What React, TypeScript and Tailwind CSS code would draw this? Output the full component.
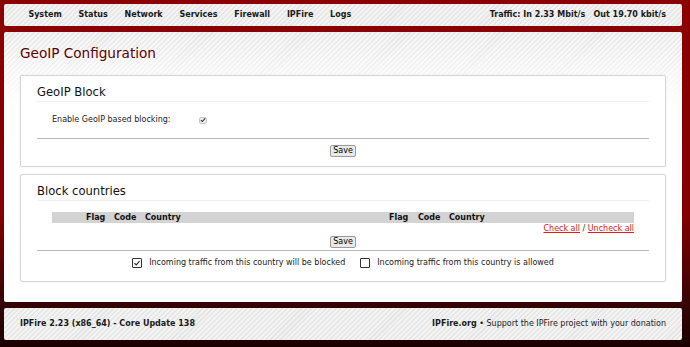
const stripes =
  "bg-[repeating-linear-gradient(135deg,#e6e6e6_0px,#e6e6e6_1.5px,#f3f3f3_1.5px,#f3f3f3_3.5px)]";

const navItems = ["System", "Status", "Network", "Services", "Firewall", "IPFire", "Logs"];

const Check = ({ checked, small }: { checked: boolean; small?: boolean }) => {
  if (small) {
    return (
      <span className="inline-flex h-[7px] w-[8px] items-center justify-center rounded-[2px] border border-[#c8c8c8] bg-[#ececec]">
        {checked && (
          <svg viewBox="0 0 10 10" className="h-[6px] w-[6px]">
            <path d="M1.5 5.2 L4 7.6 L8.6 2.2" fill="none" stroke="#333" strokeWidth="1.8" />
          </svg>
        )}
      </span>
    );
  }
  return (
    <span className="inline-flex h-[10px] w-[10px] items-center justify-center rounded-[1px] border border-[#333] bg-white">
      {checked && (
        <svg viewBox="0 0 10 10" className="h-[8px] w-[8px]">
          <path d="M1.8 5.2 L4 7.4 L8.2 2.6" fill="none" stroke="#222" strokeWidth="1.3" />
        </svg>
      )}
    </span>
  );
};

const SaveButton = () => (
  <div className="flex justify-center">
    <span className="flex h-[12px] items-center rounded-[2px] border border-[#9a9a9a] bg-[#e9e9e9] px-[2px] text-[8px] leading-none text-black">
      Save
    </span>
  </div>
);

const Section = ({ title, children }: { title: string; children: React.ReactNode }) => (
  <div className="rounded-[2px] border border-[#d6d6d6] bg-white px-[16px] shadow-[0_0_2px_rgba(0,0,0,0.08)]">
    <h2 className="pt-[9px] text-[11.6px] leading-[14px] text-[#111]">{title}</h2>
    <div className="mt-[2px] h-px bg-[#f0f0f0]" />
    {children}
  </div>
);

export default function App() {
  return (
    <div
      className="h-[347px] w-[690px] overflow-hidden bg-[linear-gradient(to_bottom,#8c0000_0%,#820000_62%,#3a0404_86%,#1a0000_100%)] pt-[4px] pl-[4px] pr-[8px] text-[#222]"
      style={{ fontFamily: '"DejaVu Sans", Verdana, sans-serif' }}
    >
      {/* top nav */}
      <div className={`flex h-[22px] items-center justify-between rounded-[2px] pl-[16px] pr-[16px] ${stripes}`}>
        <div className="flex">
          {navItems.map((item) => (
            <span key={item} className="px-[8.4px] text-[8px] font-bold text-[#1a1a1a]">
              {item}
            </span>
          ))}
        </div>
        <span className="text-[8px] font-bold text-[#1a1a1a]">
          Traffic: In 2.33 Mbit/s&nbsp;&nbsp;&nbsp;Out 19.70 kbit/s
        </span>
      </div>

      {/* main */}
      <div className="mt-[6px] h-[270px] rounded-[2px] bg-[linear-gradient(to_bottom,rgba(255,255,255,0)_0px,rgba(255,255,255,0.6)_40px,#ffffff_75px),repeating-linear-gradient(135deg,#e6e6e6_0px,#e6e6e6_1.5px,#f5f5f5_1.5px,#f5f5f5_3.5px)] px-[16px]">
        <h1 className="pt-[12px] text-[13.6px] leading-[18px] text-[#5c0000]">GeoIP Configuration</h1>

        <div className="mt-[13px]">
          <Section title="GeoIP Block">
            <div className="flex h-[36px] items-center pl-[15px] text-[8px]">
              <span className="w-[147px]">Enable GeoIP based blocking:</span>
              <Check checked small />
            </div>
            <div className="h-px bg-[#b8b8b8]" />
            <div className="pt-[6px] pb-[9px]">
              <SaveButton />
            </div>
          </Section>
        </div>

        <div className="mt-[7px]">
          <Section title="Block countries">
            <div className="px-[15px] pt-[11px]">
              <div className="grid h-[11px] grid-cols-[34px_28px_31px_244px_29px_31px_1fr] items-center bg-[#d3d3d3] text-[8px] font-bold text-[#111]">
                <span />
                <span>Flag</span>
                <span>Code</span>
                <span>Country</span>
                <span>Flag</span>
                <span>Code</span>
                <span>Country</span>
              </div>
              <div className="flex justify-end pt-[1px] text-[8px] leading-[10px] text-[#333]">
                <span className="text-[#e0201a] underline">Check all</span>
                <span>&nbsp;/&nbsp;</span>
                <span className="text-[#e0201a] underline">Uncheck all</span>
              </div>
            </div>
            <div className="pt-[2px] pb-[2px]">
              <SaveButton />
            </div>
            <div className="h-px bg-[#b8b8b8]" />
            <div className="flex items-center justify-center gap-[7px] pt-[7px] pb-[13px] text-[8px] leading-[10px] text-[#222]">
              <Check checked />
              <span>Incoming traffic from this country will be blocked</span>
              <span className="w-[1px]" />
              <Check checked={false} />
              <span>Incoming traffic from this country is allowed</span>
            </div>
          </Section>
        </div>
      </div>

      {/* footer */}
      <div className={`mt-[6px] flex h-[32px] items-center justify-between rounded-[2px] px-[16px] text-[8px] ${stripes}`}>
        <span className="font-bold text-[#1a1a1a]">IPFire 2.23 (x86_64) - Core Update 138</span>
        <span className="text-[#1a1a1a]">
          <span className="font-bold">IPFire.org</span> • Support the IPFire project with your donation
        </span>
      </div>
    </div>
  );
}
